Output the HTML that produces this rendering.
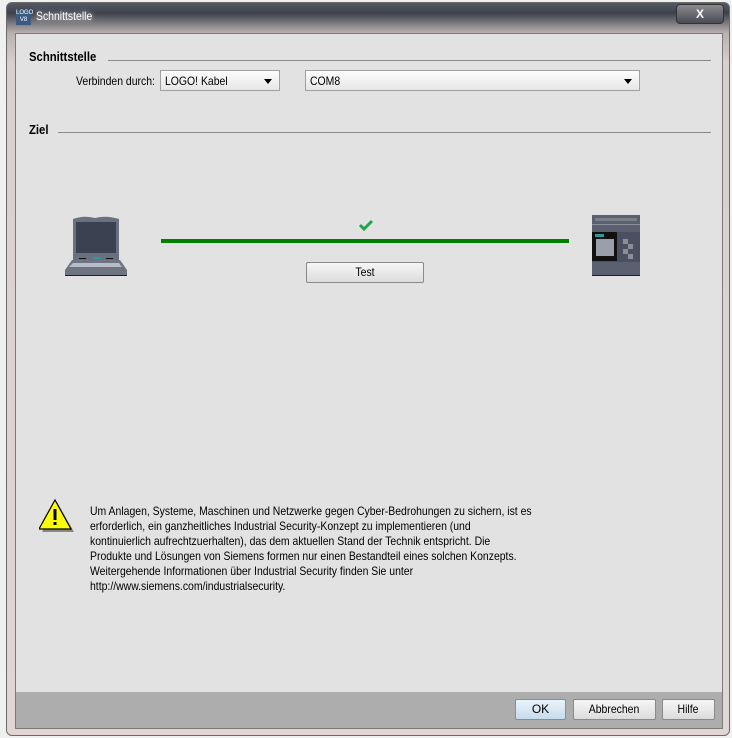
<!DOCTYPE html>
<html><head><meta charset="utf-8"><style>
*{margin:0;padding:0;box-sizing:border-box}
body{width:732px;height:738px;background:#f0f0f0;position:relative;overflow:hidden;font-family:"Liberation Sans",sans-serif;font-size:12px;color:#000}
.n{display:inline-block;transform:scaleX(0.87);transform-origin:left top;white-space:nowrap}
.frame{position:absolute;left:6px;top:2px;width:724px;height:734px;border:1px solid #6a6a6a;border-radius:6px;background:linear-gradient(#555a66,#3d414b 10px,#b9b0b0 30px,#d9cfcf 60px,#e2d6d4);}
.title{position:absolute;left:16px;top:8px;height:20px;font-size:13px;color:#000}
.title .ic{position:absolute;left:0;top:2px;width:15px;height:15px;background:#3a5a80;color:#fff;font-size:6px;line-height:7px;text-align:center}
.title span.t{position:absolute;left:20px;top:1px;white-space:nowrap;font-size:12px;color:#fff;text-shadow:0 0 6px #ddd}
.close{position:absolute;left:676px;top:4px;width:48px;height:20px;border:1px solid #333;border-radius:4px;background:linear-gradient(#8a8a90,#4a4a55);color:#fff;font-weight:bold;font-size:12px;text-align:center;line-height:18px}
.content{position:absolute;left:15px;top:33px;width:708px;height:696px;background:#e2e2e2;border:1px solid #7a7a7a}
.bar{position:absolute;left:0;bottom:0;width:706px;height:36px;background:#adadad}
.hdr{position:absolute;font-weight:bold;font-size:13px}
.line{position:absolute;height:1px;background:#8a8a8a}
.cb{position:absolute;height:21px;border:1px solid #a0a0a0;background:linear-gradient(#fdfdfd,#e6e6e6);padding:3px 4px;font-size:12px}
.cb:after{content:"";position:absolute;right:7px;top:8px;border-left:4px solid transparent;border-right:4px solid transparent;border-top:5px solid #000}
.btn{position:absolute;height:21px;border:1px solid #8a8a8a;border-radius:2px;background:linear-gradient(#f6f6f6,#dcdcdc);text-align:center;line-height:19px;font-size:12px}
.warn{position:absolute;left:74px;top:470px;line-height:15px;font-size:12px}
</style></head><body>
<div class="frame"></div>
<div class="title"><div class="ic">LOGO<br>V8</div><span class="t"><span class="n">Schnittstelle</span></span></div>
<div class="close">X</div>
<div class="content">
 <div class="hdr" style="left:13px;top:15px"><span class="n">Schnittstelle</span></div>
 <div class="line" style="left:92px;top:26px;width:603px"></div>
 <div style="position:absolute;left:60px;top:40px"><span class="n">Verbinden durch:</span></div>
 <div class="cb" style="left:144px;top:36px;width:120px"><span class="n">LOGO! Kabel</span></div>
 <div class="cb" style="left:289px;top:36px;width:335px"><span class="n">COM8</span></div>
 <div class="hdr" style="left:13px;top:88px"><span class="n">Ziel</span></div>
 <div class="line" style="left:42px;top:98px;width:653px"></div>
 <svg style="position:absolute;left:48px;top:180px" width="78" height="62" viewBox="0 0 78 62">
  <path d="M9 5 Q20 1 31 4 Q42 1 55 5 L55 46 L9 46 Z" fill="#6a7080"/>
  <rect x="12" y="8" width="40" height="31" fill="#3a4252"/>
  <rect x="15" y="44" width="7" height="1" fill="#111"/><rect x="42" y="44" width="7" height="1" fill="#111"/>
  <rect x="29" y="43" width="8" height="2" fill="#2a9a9a"/>
  <path d="M8 46 L56 46 L63 56 L63 61 L1 61 L1 56 Z" fill="#6e7482"/>
  <path d="M9 49 L55 49 L58 53 L5 53 Z" fill="#b8bcc8"/>
  <rect x="1" y="61" width="62" height="1" fill="#222"/>
 </svg>
 <svg style="position:absolute;left:342px;top:185px" width="16" height="12" viewBox="0 0 16 12"><path d="M2 6 L6 10 L14 2" stroke="#1aa84a" stroke-width="3" fill="none"/></svg>
 <div style="position:absolute;left:145px;top:205px;width:408px;height:4px;background:#008000"></div>
 <div class="btn" style="left:290px;top:228px;width:118px"><span class="n" style="transform-origin:center top">Test</span></div>
 <svg style="position:absolute;left:576px;top:181px" width="48" height="61" viewBox="0 0 48 61">
  <rect width="48" height="60" fill="#5a6070"/>
  <rect x="3" y="3" width="42" height="3" fill="#7a808a"/>
  <rect x="0" y="9" width="48" height="1" fill="#8a909a"/>
  <rect x="0" y="17" width="48" height="30" fill="#4a5060"/>
  <rect x="0" y="17" width="25" height="29" fill="#111"/>
  <rect x="3" y="19" width="9" height="3" fill="#2a9a9a"/>
  <rect x="4" y="24" width="18" height="17" fill="#9aa0aa"/>
  <rect x="31" y="24" width="5" height="5" fill="#8a909a"/><rect x="36" y="29" width="5" height="5" fill="#8a909a"/><rect x="31" y="34" width="5" height="5" fill="#8a909a"/><rect x="36" y="39" width="5" height="5" fill="#8a909a"/>
  <rect x="0" y="60" width="48" height="1" fill="#222"/>
 </svg>
 <svg style="position:absolute;left:23px;top:465px" width="36" height="34" viewBox="0 0 36 34">
  <path d="M17 2 L34 32 L2 32 Z" fill="#888" transform="translate(1,1)"/>
  <path d="M16 1 L32 30 L0 30 Z" fill="#ffff00" stroke="#000" stroke-width="1.2"/>
  <rect x="14.5" y="10" width="3" height="11" fill="#000"/><rect x="14.5" y="23" width="3" height="3" fill="#000"/>
 </svg>
 <div class="warn"><span class="n">Um Anlagen, Systeme, Maschinen und Netzwerke gegen Cyber-Bedrohungen zu sichern, ist es<br>erforderlich, ein ganzheitliches Industrial Security-Konzept zu implementieren (und<br>kontinuierlich aufrechtzuerhalten), das dem aktuellen Stand der Technik entspricht. Die<br>Produkte und Lösungen von Siemens formen nur einen Bestandteil eines solchen Konzepts.<br>Weitergehende Informationen über Industrial Security finden Sie unter<br>http://www.siemens.com/industrialsecurity.</span></div>
 <div class="bar">
  <div class="btn" style="left:499px;top:7px;width:51px;border-color:#5a9ad0;background:linear-gradient(#eaf4fb,#c6dbea)">OK</div>
  <div class="btn" style="left:557px;top:7px;width:83px"><span class="n" style="transform-origin:center top">Abbrechen</span></div>
  <div class="btn" style="left:646px;top:7px;width:53px"><span class="n" style="transform-origin:center top">Hilfe</span></div>
 </div>
</div>
</body></html>
